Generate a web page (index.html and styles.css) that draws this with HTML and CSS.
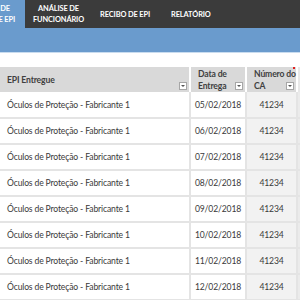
FILE: index.html
```html
<!DOCTYPE html>
<html lang="pt-BR">

<head>
    <meta charset="UTF-8">
    <title>Controle de Entrega de EPI</title>
    <link rel="stylesheet" href="styles.css">
</head>

<body>
    <div class="nav">
        <div class="tab active">
            <span class="line1">CONTROLE DE</span>
            <span class="line2">ENTREGA DE EPI</span>
        </div>
        <div class="tab">ANÁLISE DE<br>FUNCIONÁRIO</div>
        <div class="tab">RECIBO DE EPI</div>
        <div class="tab">RELATÓRIO</div>
    </div>
    <div class="band"></div>

    <table class="grid">
        <colgroup>
            <col class="c-epi">
            <col class="c-data">
            <col class="c-ca">
            <col>
        </colgroup>
        <thead>
            <tr>
                <th>EPI Entregue<span class="drop"></span></th>
                <th>Data de<br>Entrega<span class="drop"></span></th>
                <th class="has-note">Número do<br>CA<span class="drop"></span></th>
                <th class="edge"></th>
            </tr>
        </thead>
        <tbody id="rows"></tbody>
    </table>

    <script>
        const rows = document.getElementById('rows');
        for (let d = 5; d <= 12; d++) {
            const day = String(d).padStart(2, '0');
            const tr = document.createElement('tr');
            tr.innerHTML =
                '<td>Óculos de Proteção - Fabricante 1</td>' +
                '<td class="center">' + day + '/02/2018</td>' +
                '<td class="center ca">41234</td>' +
                '<td class="edge"></td>';
            rows.appendChild(tr);
        }
    </script>
</body>

</html>
```

FILE: styles.css
```css
* {
    box-sizing: border-box;
    margin: 0;
    padding: 0;
}

body {
    width: 300px;
    height: 300px;
    overflow: hidden;
    background-color: #fff;
    font-family: Lato, "Open Sans", sans-serif;
    color: #3a3a3a;
}

/* top menu */
.nav {
    display: flex;
    height: 28px;
    background-color: #3b3b3b;
}

.tab {
    flex: none;
    display: flex;
    align-items: center;
    justify-content: center;
    padding: 0 9px;
    color: #fff;
    font-size: 7.4px;
    font-weight: bold;
    letter-spacing: -0.1px;
    line-height: 11px;
    text-align: center;
    white-space: nowrap;
}

.tab.active {
    width: 80px;
    margin-left: -55px;
    padding: 0;
    flex-direction: column;
    align-items: flex-end;
    background-color: #6a9bcd;
}

.tab.active .line1 { padding-right: 15px; }
.tab.active .line2 { padding-right: 10px; }

.tab:nth-child(2) { padding: 0 8px 0 8px; }
.tab:nth-child(3) { padding: 0 11px 0 8px; }
.tab:nth-child(4) { padding: 0 10px 0 10px; }

.band {
    height: 25px;
    background-color: #6a9bcd;
    border-bottom: 1px solid #c9dcef;
    margin-bottom: 14px;
}

/* sheet table */
.grid {
    border-collapse: collapse;
    table-layout: fixed;
    width: 300px;
    font-size: 8.6px;
    letter-spacing: -0.15px;
}

.c-epi { width: 190px; }
.c-data { width: 56px; }
.c-ca { width: 51px; }

.grid th {
    height: 25px;
    background-color: #d9d9d9;
    border-right: 2px solid #fff;
    padding: 0 0 0 7px;
    text-align: left;
    font-weight: bold;
    line-height: 12px;
    color: #404040;
    white-space: nowrap;
    position: relative;
}

/* filter buttons sit over the header cell */
.drop {
    position: absolute;
    right: 2px;
    bottom: 2px;
    width: 8px;
    height: 8px;
    background-color: #fff;
    border: 1px solid #a6a6a6;
}

.drop::after {
    content: '';
    position: absolute;
    left: 1px;
    top: 2px;
    border-left: 2px solid transparent;
    border-right: 2px solid transparent;
    border-top: 2px solid #555;
}

.has-note::before {
    content: '';
    position: absolute;
    right: 1px;
    top: 0;
    width: 2px;
    height: 2px;
    background-color: #e02020;
}

.grid th.edge {
    background-color: #e8e8e8;
    border-right: none;
    padding: 0;
}

.grid td {
    height: 26px;
    padding: 0 7px;
    border-right: 2px solid #e4e4e4;
    border-bottom: 2px solid #e4e4e4;
    white-space: nowrap;
    color: #3a3a3a;
}

.grid td.center {
    text-align: center;
    padding: 0;
}

.grid td.ca {
    background-color: #f2f2f2;
}

.grid td.edge {
    padding: 0;
    background-color: #ebebeb;
    border-right: none;
}
```
